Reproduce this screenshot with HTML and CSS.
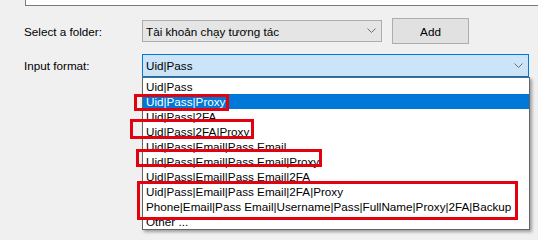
FILE: index.html
```html
<!DOCTYPE html>
<html>
<head>
<meta charset="utf-8">
<link rel="stylesheet" href="styles.css">
</head>
<body>
<div class="page">
  <div class="topbox"></div>
  <div class="form">
    <div class="row row-folder">
      <span class="label">Select a folder:</span>
      <div class="combo combo-folder">
        <span class="combo-text">Tài khoản chạy tương tác</span>
        <svg class="chev" width="9" height="6" viewBox="0 0 9 6"><polyline points="0.5,0.5 4.5,4.5 8.5,0.5" fill="none" stroke="#6d6d6d" stroke-width="1"/></svg>
      </div>
      <button class="btn">Add</button>
    </div>
    <div class="row row-format">
      <span class="label">Input format:</span>
      <div class="combo-wrap">
        <div class="combo combo-focus">
          <span class="combo-text">Uid|Pass</span>
          <svg class="chev" width="9" height="6" viewBox="0 0 9 6"><polyline points="0.5,0.5 4.5,4.5 8.5,0.5" fill="none" stroke="#6d6d6d" stroke-width="1"/></svg>
        </div>
        <ul class="list">
          <li>Uid|Pass</li>
          <li class="sel">Uid|Pass|Proxy</li>
          <li>Uid|Pass|2FA</li>
          <li>Uid|Pass|2FA|Proxy</li>
          <li>Uid|Pass|Email|Pass Email</li>
          <li>Uid|Pass|Email|Pass Email|Proxy</li>
          <li>Uid|Pass|Email|Pass Email|2FA</li>
          <li>Uid|Pass|Email|Pass Email|2FA|Proxy</li>
          <li>Phone|Email|Pass Email|Username|Pass|FullName|Proxy|2FA|Backup</li>
          <li>Other ...</li>
        </ul>
      </div>
    </div>
  </div>
  <div class="mark mark-1"></div>
  <div class="mark mark-2"></div>
  <div class="mark mark-3"></div>
  <div class="mark mark-4"></div>
</div>
</body>
</html>
```

FILE: styles.css
```css
html, body {
  margin: 0;
  padding: 0;
  background: #f0f0f0;
}
.page {
  position: relative;
  width: 538px;
  height: 235px;
  overflow: hidden;
  font-family: "Liberation Sans", Arial, sans-serif;
  font-size: 11.7px;
  color: #000;
}
.topbox {
  margin-left: 25px;
  width: 530px;
  height: 5px;
  background: #fff;
  border-left: 1px solid #7a7a7a;
  border-bottom: 1px solid #7a7a7a;
}
.form {
  padding-left: 24px;
  padding-top: 12px;
  display: flex;
  flex-direction: column;
  gap: 10px;
}
.row {
  display: flex;
  align-items: center;
}
.row-folder {
  height: 26px;
}
.label {
  width: 118px;
  flex: none;
}
.combo {
  box-sizing: border-box;
  display: flex;
  align-items: center;
  justify-content: space-between;
  padding: 0 5px 0 3px;
}
.combo-folder {
  width: 240px;
  height: 22px;
  background: #e5e5e5;
  border: 1px solid #adadad;
}
.btn {
  margin-left: 10px;
  width: 77px;
  height: 26px;
  box-sizing: border-box;
  background: #e1e1e1;
  border: 1px solid #adadad;
  font: inherit;
  color: #000;
  padding: 0;
}
.combo-wrap {
  position: relative;
}
.combo-focus {
  width: 387px;
  height: 23px;
  background: #cce4f7;
  border: 1px solid #0078d7;
}
.list {
  position: absolute;
  top: 100%;
  left: 0;
  width: 388px;
  box-sizing: border-box;
  margin: 0;
  padding: 1px 0 0;
  list-style: none;
  background: #fff;
  border: 1px solid #646464;
  box-shadow: 2px 2px 3px rgba(0,0,0,0.35);
}
.list li {
  height: 15px;
  line-height: 15px;
  padding-left: 3px;
  white-space: nowrap;
}
.list li.sel {
  background: #0078d7;
  color: #fff;
}
.mark {
  position: absolute;
  box-sizing: border-box;
  border: 3px solid #e3000f;
}
.mark-1 { left: 134px; top: 94px; width: 95px; height: 17px; }
.mark-2 { left: 130px; top: 119px; width: 124px; height: 20px; }
.mark-3 { left: 136px; top: 149px; width: 186px; height: 18px; }
.mark-4 { left: 137px; top: 181px; width: 381px; height: 39px; }
```
